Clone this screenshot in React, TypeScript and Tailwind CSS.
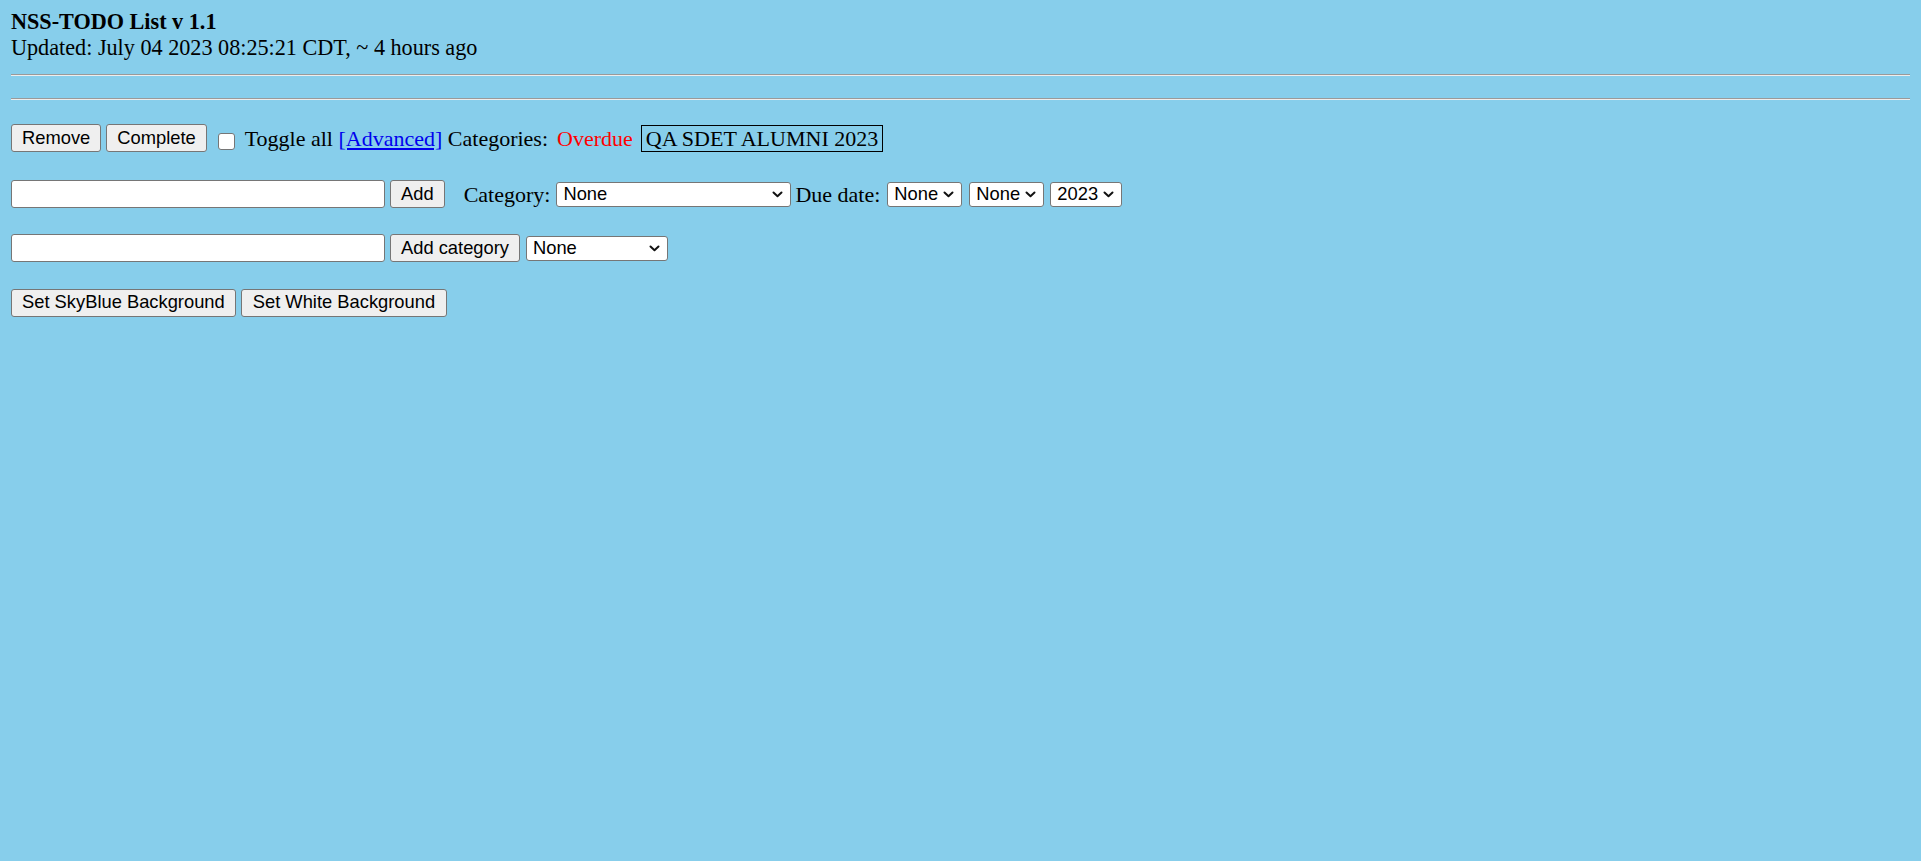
import React, { useState } from 'react';

const serif = { fontFamily: '"Liberation Serif", "Times New Roman", serif' };

const btn =
  'h-[28px] px-[10px] bg-[#efefef] border border-[#767676] rounded-[3px] text-[18.33px] leading-none text-black flex items-center whitespace-nowrap font-["Liberation_Sans",Arial,sans-serif]';

const Chevron: React.FC = () => (
  <svg width="11" height="7" viewBox="0 0 11 7" fill="none" className="shrink-0">
    <path d="M1.5 1.5 L5.5 5.2 L9.5 1.5" stroke="#111" strokeWidth="2" strokeLinecap="round" strokeLinejoin="round" />
  </svg>
);

const FakeSelect: React.FC<{ value: string; className?: string }> = ({ value, className = '' }) => (
  <div
    className={`h-[25px] bg-white border border-[#767676] rounded-[3px] flex items-center justify-between pl-[6px] pr-[7px] text-[18.33px] leading-none text-black font-["Liberation_Sans",Arial,sans-serif] ${className}`}
  >
    <span>{value}</span>
    <Chevron />
  </div>
);

const Divider: React.FC<{ className?: string }> = ({ className = '' }) => (
  <div className={`h-[2px] border-t border-t-[#9a9a9a] border-b border-b-[#eeeeee] ${className}`} />
);

const App: React.FC = () => {
  const [bg, setBg] = useState('bg-[#87ceeb]');
  const [allChecked, setAllChecked] = useState(false);

  return (
    <div className={`min-h-[861px] ${bg} px-[11px] pt-[9px] text-black`} style={serif}>
      {/* Header */}
      <div className="text-[22.2px] leading-[26px] font-bold">NSS-TODO List v 1.1</div>
      <div className="text-[22.2px] leading-[26px]">Updated: July 04 2023 08:25:21 CDT, ~ 4 hours ago</div>

      <Divider className="mt-[13px]" />
      <Divider className="mt-[22px]" />

      {/* Actions / categories */}
      <div className="mt-[24px] h-[28px] flex items-center text-[22px] leading-[25px]">
        <button className={btn}>Remove</button>
        <button className={`${btn} ml-[5px]`}>Complete</button>
        <input
          type="checkbox"
          checked={allChecked}
          onChange={e => setAllChecked(e.target.checked)}
          className="ml-[11px] mt-[7px] w-[17px] h-[17px] appearance-none bg-white border border-[#767676] rounded-[3px]"
        />
        <span className="ml-[10px] whitespace-pre">
          Toggle all <a href="#" className="text-[#0000ee] underline">[Advanced]</a> Categories:
        </span>
        <span className="ml-[9px] text-[#ff0000]">Overdue</span>
        <span className="ml-[8px] h-[27px] border border-black px-[4px] flex items-center">QA SDET ALUMNI 2023</span>
      </div>

      {/* New todo */}
      <div className="mt-[28px] h-[28px] flex items-center text-[22px] leading-[25px]">
        <input type="text" className="w-[374px] h-[28px] bg-white border border-[#767676] rounded-[3px]" />
        <button className={`${btn} ml-[5px]`}>Add</button>
        <span className="ml-[19px]">Category:</span>
        <FakeSelect value="None" className="ml-[6px] w-[235px]" />
        <span className="ml-[4px]">Due date:</span>
        <FakeSelect value="None" className="ml-[7px] w-[75px]" />
        <FakeSelect value="None" className="ml-[7px] w-[75px]" />
        <FakeSelect value="2023" className="ml-[6px] w-[72px]" />
      </div>

      {/* New category */}
      <div className="mt-[26px] h-[28px] flex items-center">
        <input type="text" className="w-[374px] h-[28px] bg-white border border-[#767676] rounded-[3px]" />
        <button className={`${btn} ml-[5px]`}>Add category</button>
        <FakeSelect value="None" className="ml-[6px] w-[142px]" />
      </div>

      {/* Background switch */}
      <div className="mt-[27px] h-[27px] flex items-center">
        <button className={`${btn} h-[27px] bg-[#e5e5e5]`} onClick={() => setBg('bg-[#87ceeb]')}>
          Set SkyBlue Background
        </button>
        <button className={`${btn} h-[27px] px-[11px] ml-[5px]`} onClick={() => setBg('bg-white')}>
          Set White Background
        </button>
      </div>
    </div>
  );
};

export default App;
